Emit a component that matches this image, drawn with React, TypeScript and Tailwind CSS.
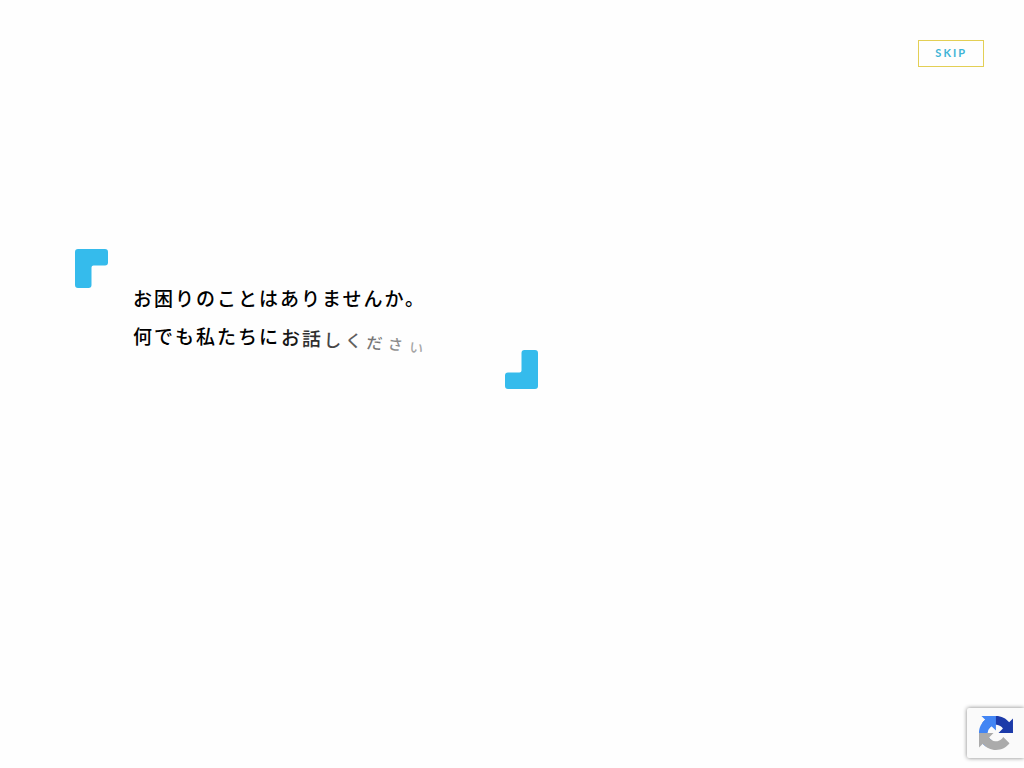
type BracketProps = {
  className?: string;
};

const firstLine = 'お困りのことはありませんか。';
const secondLine = '何でも私たちに';
const enteringChars = ['お', '話', 'し', 'く', 'だ', 'さ', 'い'];

// Entrance state of each character, from almost settled to just appearing
function getEntrance(index: number) {
  const remaining = (index + 1) / enteringChars.length;

  return {
    opacity: 1 - remaining * 0.65,
    fontSize: `${Math.round(19 - remaining * remaining * 5)}px`,
    transform: `translateY(${Math.round(1 + remaining * remaining * 10)}px) rotate(${Math.round(remaining * remaining * 10)}deg)`,
  };
}

function Bracket({ className }: BracketProps) {
  return (
    <svg
      className={className}
      width="33"
      height="39"
      viewBox="0 0 33 39"
      fill="#35bbec"
      aria-hidden="true"
    >
      <path d="M3 0h27a3 3 0 0 1 3 3v10.500a3 3 0 0 1-3 3H18.500a2 2 0 0 0-2 2V36a3 3 0 0 1-3 3H3a3 3 0 0 1-3-3V3a3 3 0 0 1 3-3z" />
    </svg>
  );
}

function RecaptchaBadge() {
  return (
    <div className="fixed right-0 bottom-[10px] flex h-[50px] w-[57px] items-center rounded-l-xs bg-[#fafafa] pl-3 shadow-[0_0_4px_#808080]">
      <svg width="34" height="34" viewBox="0 0 64 64" role="img" aria-label="reCAPTCHA">
        <path
          fill="#1c3aa9"
          d="M64 31.955l-.033-1.37V4.687l-7.16 7.16C50.948 4.674 42.033.093 32.05.093c-10.4 0-19.622 4.96-25.458 12.64l11.736 11.86a15.55 15.55 0 0 1 4.754-5.334c2.05-1.6 4.952-2.906 8.968-2.906.485 0 .86.057 1.135.163 4.976.393 9.288 3.14 11.828 7.124l-8.307 8.307L64 31.953"
        />
        <path
          fill="#4285f4"
          d="M31.862.094l-1.37.033H4.594l7.16 7.16C4.58 13.147 0 22.06 0 32.046c0 10.4 4.96 19.622 12.64 25.458L24.5 45.768a15.55 15.55 0 0 1-5.334-4.754c-1.6-2.05-2.906-4.952-2.906-8.968 0-.485.057-.86.163-1.135.393-4.976 3.14-9.288 7.124-11.828l8.307 8.307L31.86.095"
        />
        <path
          fill="#ababab"
          d="M.001 32.045l.033 1.37v25.898l7.16-7.16c5.86 7.173 14.774 11.754 24.76 11.754 10.4 0 19.622-4.96 25.458-12.64l-11.736-11.86a15.55 15.55 0 0 1-4.754 5.334c-2.05 1.6-4.952 2.906-8.968 2.906-.485 0-.86-.057-1.135-.163-4.976-.393-9.288-3.14-11.828-7.124l8.307-8.307c-10.522.04-22.4.066-27.295-.005"
        />
      </svg>
    </div>
  );
}

export default function App() {
  return (
    <div className="min-h-screen bg-[#fefefe] font-['Noto_Sans_CJK_JP',sans-serif] text-black">
      <header className="flex justify-end p-10">
        <button
          type="button"
          className="h-[27px] border border-[#e3cf55] px-4 font-['Lato',sans-serif] text-[11px] font-bold tracking-[2px] text-[#3fb4d6]"
        >
          SKIP
        </button>
      </header>

      <main className="px-[75px] pt-[142px]">
        <div className="flex max-w-[463px] flex-col">
          <Bracket />
          <div className="-mt-[9px] pl-[58px] text-[19px] leading-[38px] font-medium tracking-[2px] whitespace-nowrap">
            <p>{firstLine}</p>
            <p className="flex">
              <span>{secondLine}</span>
              {enteringChars.map((char, index) => (
                <span
                  key={index}
                  className="w-[21px] text-center tracking-normal"
                  style={getEntrance(index)}
                >
                  {char}
                </span>
              ))}
            </p>
          </div>
          <Bracket className="-mt-[5px] rotate-180 self-end" />
        </div>
      </main>

      <RecaptchaBadge />
    </div>
  );
}
